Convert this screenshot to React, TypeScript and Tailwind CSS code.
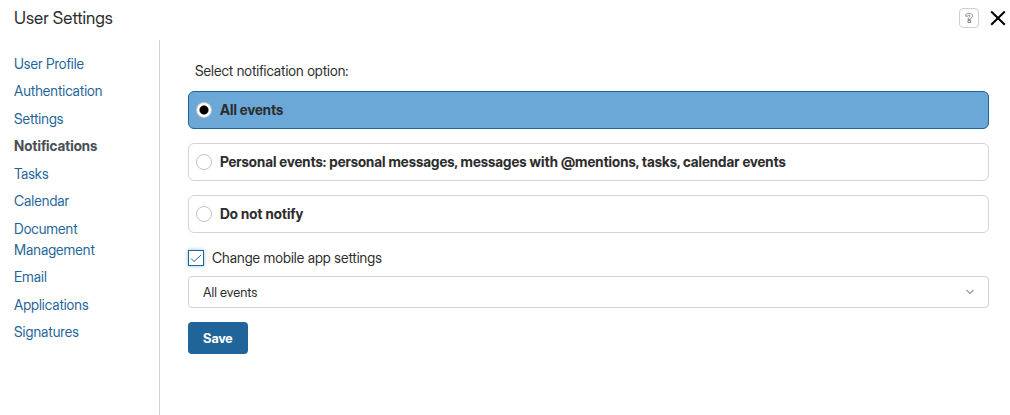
import { useState } from "react";

const links = [
  "User Profile",
  "Authentication",
  "Settings",
  "Notifications",
  "Tasks",
  "Calendar",
  "Document Management",
  "Email",
  "Applications",
  "Signatures",
];

const options = [
  "All events",
  "Personal events: personal messages, messages with @mentions, tasks, calendar events",
  "Do not notify",
];

function Header() {
  return (
    <header className="flex h-10 items-start justify-between pt-2 pr-1 pl-3.5">
      <h1 className="text-[17px] leading-5 text-[#2d2d2d]">User Settings</h1>
      <div className="flex items-center gap-[11px]">
        <button
          type="button"
          aria-label="Help"
          className="flex size-5 items-center justify-center rounded border border-[#cfcfcf] bg-white"
        >
          <svg viewBox="0 0 10 12" className="h-3 w-2.5" fill="none" aria-hidden="true">
            <path
              d="M1.500 4.200C1.500 2.200 3 1.300 5 1.300s3.500.9 3.500 2.600C8.500 5.900 6.400 5.800 6.400 7.500H4C4 5.300 6.100 5 6.100 3.900 6.100 3.400 5.600 3.100 5 3.100S3.900 3.500 3.900 4.200Z"
              stroke="#777"
              strokeWidth="0.8"
            />
            <rect x="4" y="8.600" width="2.400" height="2" stroke="#777" strokeWidth="0.8" />
          </svg>
        </button>
        <button type="button" aria-label="Close" className="flex size-4 items-center justify-center">
          <svg viewBox="0 0 16 16" className="size-4" fill="none" aria-hidden="true">
            <path d="M1.200 1.500 14.800 14.800M14.800 1.500 1.200 14.800" stroke="#000" strokeWidth="2" />
          </svg>
        </button>
      </div>
    </header>
  );
}

export default function App() {
  const [choice, setChoice] = useState(0);
  const [mobile, setMobile] = useState(true);

  return (
    <div className="flex min-h-screen flex-col bg-white font-['Inter_Display','Inter',sans-serif] text-sm text-[#2d2d2d]">
      <Header />
      <div className="flex flex-1">
        <nav className="w-40 shrink-0 border-r border-[#d2d2d2] pt-[13px] pr-8 pl-3.5">
          <ul className="flex min-h-[289px] flex-col justify-between leading-[21px]">
            {links.map((name) => (
              <li key={name}>
                {name === "Notifications" ? (
                  <a href="#notifications" aria-current="page" className="block font-bold text-[#4a4f55]">
                    {name}
                  </a>
                ) : (
                  <a href="#section" className="block text-[#1f6599]">
                    {name}
                  </a>
                )}
              </li>
            ))}
          </ul>
        </nav>
        <main className="min-w-0 flex-1 pt-5 pr-[21px] pl-7">
          <form onSubmit={(e) => e.preventDefault()}>
            <fieldset>
              <legend className="mb-[9px] px-[7px] leading-[22px]">Select notification option:</legend>
              <div className="flex flex-col gap-3.5">
                {options.map((text, i) => (
                  <label
                    key={text}
                    className={
                      choice === i
                        ? "flex items-center gap-2 rounded-md border border-[#1f6599] bg-[#6ba8d8] px-[7px] py-2 leading-5 font-bold"
                        : "flex items-center gap-2 rounded-md border border-[#d5d5d5] bg-white px-[7px] py-2 leading-5 font-bold"
                    }
                  >
                    <input
                      type="radio"
                      name="notify"
                      checked={choice === i}
                      onChange={() => setChoice(i)}
                      className="size-4 shrink-0 appearance-none rounded-full border border-[#c3c3c3] bg-white checked:bg-[radial-gradient(circle,#000_4px,#fff_5px)]"
                    />
                    {text}
                  </label>
                ))}
              </div>
            </fieldset>
            <label className="mt-3.5 flex items-center gap-2 leading-[22px]">
              <span className="grid size-4 shrink-0">
                <input
                  type="checkbox"
                  checked={mobile}
                  onChange={(e) => setMobile(e.target.checked)}
                  className="peer col-start-1 row-start-1 size-4 appearance-none border border-[#1f6599] bg-white shadow-[0_0_4px_#8fbfe4]"
                />
                <svg
                  viewBox="0 0 16 16"
                  className="pointer-events-none invisible col-start-1 row-start-1 size-4 peer-checked:visible"
                  fill="none"
                  aria-hidden="true"
                >
                  <path d="M3 8.500 6 11.500 13 5" stroke="#1f6599" strokeWidth="1" />
                </svg>
              </span>
              Change mobile app settings
            </label>
            <div className="mt-[7px] grid items-center">
              <select
                aria-label="Mobile app notifications"
                className="col-start-1 row-start-1 h-8 w-full appearance-none rounded border border-[#d2d2d2] bg-white px-3.5 text-[13px]"
              >
                {options.map((text) => (
                  <option key={text}>{text}</option>
                ))}
              </select>
              <svg
                viewBox="0 0 8 6"
                className="pointer-events-none col-start-1 row-start-1 mr-[15px] h-1.5 w-2 justify-self-end"
                fill="none"
                aria-hidden="true"
              >
                <path d="M0.500 1 4 4.500 7.500 1" stroke="#999" strokeWidth="1.200" />
              </svg>
            </div>
            <button
              type="submit"
              className="mt-3.5 h-8 rounded bg-[#1f6599] px-[15px] text-[13px] font-bold text-white"
            >
              Save
            </button>
          </form>
        </main>
      </div>
    </div>
  );
}
